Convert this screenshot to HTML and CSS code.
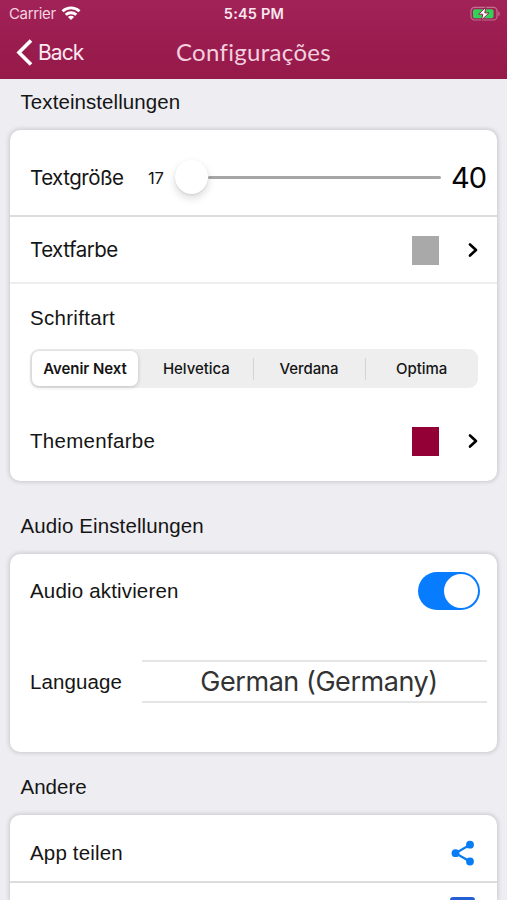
FILE: index.html
```html
<!DOCTYPE html>
<html lang="de">
<head>
<meta charset="utf-8">
<title>Configurações</title>
<link rel="stylesheet" href="styles.css">
</head>
<body>
<header class="header">
  <div class="status">
    <div class="carrier"><span>Carrier</span>
      <svg class="wifi" width="20" height="15" viewBox="0 0 20 15" fill="none" stroke="#fff" stroke-width="2.9"><path d="M1.500 5.200C6.400.7 13.600.7 18.500 5.200M4.700 8.800c3-2.800 7.600-2.800 10.600 0"/><path d="M10 13.900 6.900 10.900c1.900-1.400 4.300-1.400 6.200 0z" fill="#fff" stroke="none"/></svg>
    </div>
    <div class="time">5:45 PM</div>
    <svg class="battery" width="31" height="16" viewBox="0 0 31 16"><rect x="1" y="1.3" width="26" height="12.700" rx="3.6" fill="none" stroke="#c66d92" stroke-width="1.2"/><rect x="3" y="3.2" width="20.500" height="9" rx="1.6" fill="#32d158"/><path d="M28.300 5.300c2 1 2 4 0 5z" fill="#c66d92"/><path d="M15.800 1.200 8.600 8.200h4.200l-1.300 5.900 7.500-7.200h-4.200z" fill="#fff" stroke="#94204e" stroke-width="1"/></svg>
  </div>
  <nav class="nav">
    <div class="back"><svg width="17" height="27" viewBox="0 0 17 27" fill="none" stroke="#fff" stroke-width="3.600"><path d="M15 1.500 3 13.500 15 25.500"/></svg><span>Back</span></div>
    <h1 class="title">Configurações</h1>
  </nav>
</header>
<main class="content">
  <h2 class="heading heading-text">Texteinstellungen</h2>
  <section class="card">
    <div class="row row-size">
      <span class="label label-size">Textgröße</span>
      <span class="min">17</span>
      <div class="slider"><span class="thumb"></span><span class="track"></span></div>
      <span class="max">40</span>
    </div>
    <div class="row row-color">
      <span class="label">Textfarbe</span>
      <span class="swatch gray"></span>
      <svg class="chevron" width="10" height="16" viewBox="0 0 10 16"><path d="M2 2.500 8 8l-6 5.500"/></svg>
    </div>
    <div class="font-block">
      <div class="label helv schrift">Schriftart</div>
      <div class="segments">
        <span class="segment selected">Avenir Next</span>
        <span class="segment">Helvetica</span>
        <span class="segment divided">Verdana</span>
        <span class="segment divided">Optima</span>
      </div>
    </div>
    <div class="row row-theme">
      <span class="label helv theme">Themenfarbe</span>
      <span class="swatch red"></span>
      <svg class="chevron" width="10" height="16" viewBox="0 0 10 16"><path d="M2 2.500 8 8l-6 5.500"/></svg>
    </div>
  </section>
  <h2 class="heading heading-audio">Audio Einstellungen</h2>
  <section class="card card-audio">
    <div class="row row-audio"><span class="label helv audio">Audio aktivieren</span><span class="switch"><span class="knob"></span></span></div>
    <div class="row row-language"><span class="label helv language">Language</span><div class="picker">German (Germany)</div></div>
  </section>
  <h2 class="heading heading-other">Andere</h2>
  <section class="card card-other">
    <div class="row row-share"><span class="label helv share">App teilen</span>
      <svg width="24" height="26" viewBox="0 0 24 26"><path d="m19 4.700-14.500 8.500L19 21.500" fill="none" stroke="#087cf5" stroke-width="2.200"/><g fill="#087cf5"><circle cx="19" cy="4.700" r="3.900"/><circle cx="4.500" cy="13.200" r="3.900"/><circle cx="19" cy="21.500" r="3.900"/></g></svg>
    </div>
    <div class="row row-next"><span class="next-icon"></span></div>
  </section>
</main>
</body>
</html>
```
FILE: styles.css
```css
* { box-sizing: border-box; }
body {
  margin: 0;
  width: 507px;
  height: 900px;
  overflow: hidden;
  background: #eeedf2;
  color: #151515;
  font-family: "Liberation Sans", Arial, sans-serif;
}
h1, h2 { margin: 0; font-weight: 400; }
svg { display: block; flex: none; }
.header {
  height: 79px;
  color: #fff;
  background: linear-gradient(#a12257, #951949);
  font-family: Inter, sans-serif;
}
.status {
  height: 27px;
  display: grid;
  grid-template-columns: 1fr auto 1fr;
  align-items: center;
  padding: 0 6px 0 9px;
}
.carrier { display: flex; align-items: center; gap: 5px; font-size: 15px; color: #f5d3e1; letter-spacing: -.35px; }
.time { font-size: 14.500px; font-weight: 600; color: #fae7ef; letter-spacing: .2px; margin-right: 2px; }
.battery { justify-self: end; }
.nav {
  height: 51px;
  display: grid;
  grid-template-columns: 1fr auto 1fr;
  align-items: center;
  padding: 0 16px;
}
.back { display: flex; align-items: center; gap: 5px; font-size: 21px; letter-spacing: -.95px; color: #fbe8f0; }
.title { font-family: Lato, sans-serif; font-size: 24px; letter-spacing: .3px; color: #f3cfdf; position: relative; top: -1px; }
.content { padding: 0 10px; }
.heading { font-size: 20.5px; line-height: 24px; padding-left: 10.500px; white-space: nowrap; }
.heading-text { height: 51px; padding-top: 11px; letter-spacing: .08px; }
.heading-audio { height: 73px; padding-top: 33px; letter-spacing: .11px; }
.heading-other { height: 63px; padding-top: 23px; }
.card {
  width: 487px;
  background: #fff;
  border-radius: 10px;
  box-shadow: 0 0 4px 1px rgba(0, 0, 0, .16);
}
.row { display: flex; align-items: center; padding-left: 20px; }
.label { font-family: Inter, sans-serif; font-size: 20.500px; line-height: 24px; white-space: nowrap; letter-spacing: -.5px; }
.label.helv { font-family: "Liberation Sans", Arial, sans-serif; letter-spacing: .1px; }
.label.schrift, .label.theme { letter-spacing: .3px; }
.label.audio, .label.share { letter-spacing: .17px; }
.row-size { height: 87px; border-bottom: 2px solid #dcdcde; padding-top: 10px; }
.label-size { width: 118px; }
.min { width: 27px; font: 16.500px Inter, sans-serif; letter-spacing: -.2px; }
.slider { width: 266px; display: flex; align-items: center; margin-top: -1px; }
.thumb { width: 33px; height: 34px; border-radius: 50%; background: #fff; box-shadow: 0 4px 9px rgba(0, 0, 0, .15), 0 1px 2px rgba(0, 0, 0, .08); z-index: 1; }
.track { flex: 1; height: 3px; border-radius: 2px; background: #a6a6a6; }
.max { margin-left: 10px; font: 29px Inter, sans-serif; color: #050505; letter-spacing: -1px; }
.row-color { height: 67px; padding-top: 1px; border-bottom: 2px solid #eeeeef; }
.swatch { width: 27px; height: 29px; margin-left: auto; margin-right: 29px; }
.gray { background: #a9a9a9; }
.red { background: #920035; }
.chevron { margin-right: 19px; fill: none; stroke: #000; stroke-width: 2.600; stroke-linecap: round; stroke-linejoin: round; }
.font-block { height: 124px; padding: 22px 20px 0; }
.segments { display: grid; grid-template-columns: 110px repeat(3, 1fr); width: 448px; height: 39px; margin-top: 19px; border-radius: 9px; background: #eeeeef; font: 500 15px Inter, sans-serif; }
.segment { display: flex; align-items: center; justify-content: center; position: relative; letter-spacing: -.05px; }
.selected { margin: 2px; border-radius: 7px; background: #fff; box-shadow: 0 1px 4px rgba(0, 0, 0, .2); font-weight: 600; }
.divided::before { content: ""; position: absolute; left: 0; top: 9px; width: 1px; height: 22px; background: #d4d4d6; }
.row-theme { height: 73px; padding-bottom: 7px; }
.card-audio { height: 198px; }
.row-audio { height: 75px; padding-bottom: 1px; }
.switch { width: 62px; height: 38px; margin-left: auto; margin-right: 17px; padding: 2px; border-radius: 19px; background: #087cff; display: flex; justify-content: flex-end; }
.knob { width: 34px; height: 34px; border-radius: 50%; background: #fff; }
.row-language { height: 105px; }
.language { width: 112px; margin-top: 1px; }
.picker { width: 345px; height: 43px; margin-top: -1px; display: flex; align-items: center; justify-content: center; padding-left: 9px; border: solid #e5e5e6; border-width: 2px 0; font: 27px Inter, sans-serif; color: #333; letter-spacing: -.45px; white-space: nowrap; }
.card-other { border-radius: 10px 10px 0 0; }
.row-share { height: 68px; padding-right: 22px; padding-top: 9px; border-bottom: 2px solid #dcdcde; justify-content: space-between; }
.row-next { height: 17px; overflow: hidden; align-items: flex-start; justify-content: flex-end; padding: 14px 22px 0 0; }
.next-icon { width: 25px; height: 3px; border-radius: 3px 3px 0 0; background: #245fd3; }
```
